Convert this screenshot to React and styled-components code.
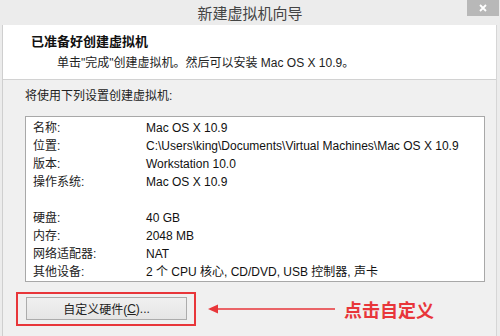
import React from "react";
import styled, { createGlobalStyle } from "styled-components";

const GlobalStyle = createGlobalStyle`
  html, body {
    margin: 0;
    padding: 0;
    background: #ececec;
  }
  body {
    font-family: "Liberation Sans", "Noto Sans CJK SC", sans-serif;
    font-size: 12px;
    color: #111;
  }
`;

const rows = [
  ["名称:", "Mac OS X 10.9"],
  ["位置:", "C:\\Users\\king\\Documents\\Virtual Machines\\Mac OS X 10.9"],
  ["版本:", "Workstation 10.0"],
  ["操作系统:", "Mac OS X 10.9"],
  ["", ""],
  ["硬盘:", "40 GB"],
  ["内存:", "2048 MB"],
  ["网络适配器:", "NAT"],
  ["其他设备:", "2 个 CPU 核心, CD/DVD, USB 控制器, 声卡"],
];

const App = () => {
  return (
    <Window>
      <GlobalStyle />
      <TitleBar>
        <Title>新建虚拟机向导</Title>
        <CloseButton>
          <svg width="10" height="10" viewBox="0 0 10 10">
            <path d="M2 2 L8 8 M8 2 L2 8" stroke="#fff" strokeWidth="1.8" />
          </svg>
        </CloseButton>
      </TitleBar>
      <Frame>
        <Header>
          <HeaderTitle>已准备好创建虚拟机</HeaderTitle>
          <HeaderText>单击"完成"创建虚拟机。然后可以安装 Mac OS X 10.9。</HeaderText>
        </Header>
        <Body>
          <Intro>将使用下列设置创建虚拟机:</Intro>
          <Summary>
            {rows.map(([label, value], i) => (
              <Row key={i}>
                <Label>{label}</Label>
                <Value>{value}</Value>
              </Row>
            ))}
          </Summary>
          <Footer>
            <Highlight>
              <Button>
                自定义硬件(<u>C</u>)...
              </Button>
            </Highlight>
            <Arrow width="128" height="12" viewBox="0 0 128 12">
              <path d="M0 6 L10 1.5 L10 10.5 Z" fill="#e8363a" />
              <path d="M9 6 L127 6" stroke="#e8363a" strokeWidth="1.5" />
            </Arrow>
            <Callout>点击自定义</Callout>
          </Footer>
        </Body>
      </Frame>
    </Window>
  );
};

export default App;

const Window = styled.div`
  width: 500px;
  height: 336px;
  display: flex;
  flex-direction: column;
  background: #ececec;
  overflow: hidden;
`;

const TitleBar = styled.div`
  height: 25px;
  flex: none;
  display: flex;
  align-items: center;
  justify-content: center;
  position: relative;
`;

const Title = styled.div`
  font-size: 15px;
  color: #444;
  margin-top: 0px;
`;

const CloseButton = styled.div`
  position: absolute;
  top: 0;
  right: 1px;
  width: 32px;
  height: 16px;
  background: #b8b8b8;
  display: flex;
  align-items: center;
  justify-content: center;
`;

const Frame = styled.div`
  flex: 1;
  margin: 0 3px 0 2px;
  border-left: 1px solid #cfcfcf;
  border-right: 1px solid #d6d6d6;
  display: flex;
  flex-direction: column;
  background: #f0f0f0;
`;

const Header = styled.div`
  background: #fff;
  height: 55px;
  border-bottom: 1px solid #d2d2d2;
  padding: 9px 0 0 28px;
  box-sizing: border-box;
  flex: none;
`;

const HeaderTitle = styled.div`
  font-weight: bold;
  font-size: 13px;
  line-height: 16px;
  color: #111;
`;

const HeaderText = styled.div`
  margin: 5px 0 0 26px;
  font-size: 12px;
  line-height: 16px;
  color: #222;
`;

const Body = styled.div`
  padding: 8px 11px 0 22px;
`;

const Intro = styled.div`
  line-height: 16px;
  color: #222;
`;

const Summary = styled.div`
  margin-top: 12px;
  background: #fff;
  border: 1px solid #a8a8a8;
  padding: 2px 7px 2px;
  height: 166px;
  box-sizing: border-box;
`;

const Row = styled.div`
  display: flex;
  height: 18px;
  line-height: 18px;
  white-space: nowrap;
`;

const Label = styled.div`
  width: 113px;
  flex: none;
  color: #222;
`;

const Value = styled.div`
  color: #111;
`;

const Footer = styled.div`
  margin: 10px 0 0 -9px;
  display: flex;
  align-items: center;
`;

const Highlight = styled.div`
  border: 2px solid #e8363a;
  padding: 3px 7px 4px 8px;
  width: 180px;
  box-sizing: border-box;
`;

const Button = styled.div`
  height: 23px;
  box-sizing: border-box;
  border: 1px solid #acacac;
  background: linear-gradient(#f0f0f0, #e5e5e5);
  display: flex;
  align-items: center;
  justify-content: center;
  color: #222;
  u {
    text-decoration: underline;
  }
`;

const Arrow = styled.svg`
  margin-left: 12px;
  flex: none;
`;

const Callout = styled.div`
  margin-left: 8px;
  font-size: 18px;
  font-weight: bold;
  color: #e8363a;
`;
